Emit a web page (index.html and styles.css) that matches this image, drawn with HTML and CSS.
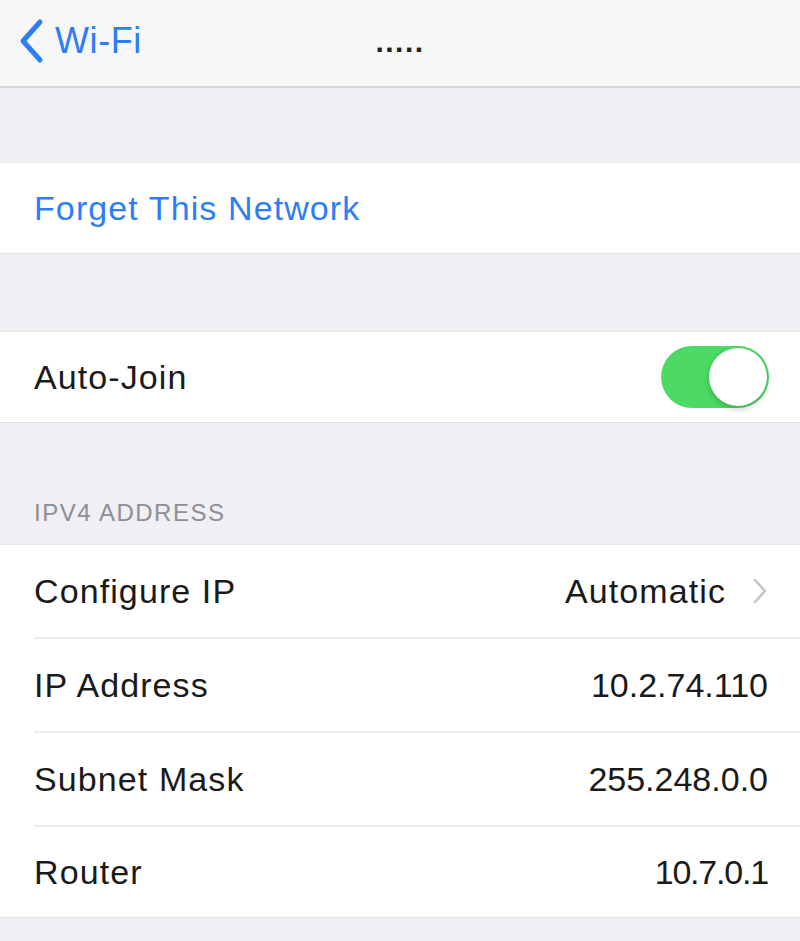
FILE: index.html
```html
<!DOCTYPE html>
<html>
<head>
<meta charset="utf-8">
<link rel="stylesheet" href="styles.css">
</head>
<body>
<div class="nav">
  <div class="back">
    <svg class="back-icon" width="26" height="46" viewBox="0 0 26 46"><path d="M22 4 L5 23 L22 42" fill="none" stroke="#2f7df6" stroke-width="5" stroke-linecap="round" stroke-linejoin="round"/></svg>
    <span class="back-label">Wi-Fi</span>
  </div>
  <div class="title">.....</div>
</div>
<div class="gap gap1"></div>
<div class="group">
  <div class="row"><span class="link">Forget This Network</span></div>
</div>
<div class="gap gap2"></div>
<div class="group">
  <div class="row">
    <span class="label">Auto-Join</span>
    <div class="toggle"><div class="knob"></div></div>
  </div>
</div>
<div class="section-header">IPV4 ADDRESS</div>
<div class="group">
  <div class="row sep">
    <span class="label">Configure IP</span>
    <span class="value">Automatic
      <svg class="chev" width="16" height="28" viewBox="0 0 16 28"><path d="M3 3 L13 14 L3 25" fill="none" stroke="#c4c4c9" stroke-width="2.5" stroke-linecap="round" stroke-linejoin="round"/></svg>
    </span>
  </div>
  <div class="row sep"><span class="label">IP Address</span><span class="value num">10.2.74.110</span></div>
  <div class="row sep"><span class="label">Subnet Mask</span><span class="value num">255.248.0.0</span></div>
  <div class="row"><span class="label">Router</span><span class="value num tight">10.7.0.1</span></div>
</div>
<div class="gap gap3"></div>
</body>
</html>
```
FILE: styles.css
```css
html, body {
  margin: 0;
  padding: 0;
  background: #efeff4;
  font-family: "Liberation Sans", Arial, sans-serif;
  color: #111;
}
.nav {
  height: 86px;
  background: #f7f7f8;
  border-bottom: 2px solid #d6d6da;
  display: flex;
  align-items: center;
  position: relative;
}
.back {
  display: flex;
  align-items: center;
  padding-left: 18px;
  gap: 11px;
  margin-top: -4px;
}
.back-label {
  color: #2f7df6;
  font-size: 36px;
  letter-spacing: 0.6px;
}
.title {
  position: absolute;
  left: 0;
  right: 0;
  top: 25px;
  text-align: center;
  font-size: 30px;
  font-weight: bold;
  letter-spacing: 1.5px;
  color: #222;
}
.gap1 { height: 74px; }
.gap2 { height: 77px; }
.gap3 { height: 30px; }
.group {
  background: #fff;
  border-top: 1px solid #e6e6ea;
  border-bottom: 1px solid #e2e2e6;
}
.row {
  height: 90px;
  display: flex;
  align-items: center;
  justify-content: space-between;
  padding: 0 32px 0 34px;
  position: relative;
  font-size: 34px;
  letter-spacing: 1.1px;
}
.row.sep {
  height: 92px;
  border-bottom: 2px solid #ececef;
  margin-left: 34px;
  padding-left: 0;
}
.link { color: #2f7df6; }
.label { color: #1a1a1a; }
.value {
  color: #1a1a1a;
  display: flex;
  align-items: center;
  gap: 26px;
}
.value.num { letter-spacing: 0; }
.value.tight { letter-spacing: -1.2px; }
.toggle {
  width: 108px;
  height: 62px;
  border-radius: 31px;
  background: #4cd964;
  display: flex;
  align-items: center;
  justify-content: flex-end;
  padding: 2px;
  box-sizing: border-box;
  margin-right: -1px;
}
.knob {
  width: 58px;
  height: 58px;
  border-radius: 50%;
  background: #fff;
  box-shadow: 0 3px 6px rgba(0,0,0,0.2), 0 0 0 0.5px rgba(0,0,0,0.05);
}
.section-header {
  height: 121px;
  box-sizing: border-box;
  padding: 0 0 17px 34px;
  display: flex;
  align-items: flex-end;
  font-size: 24px;
  letter-spacing: 1.5px;
  color: #8e8e93;
}
```
